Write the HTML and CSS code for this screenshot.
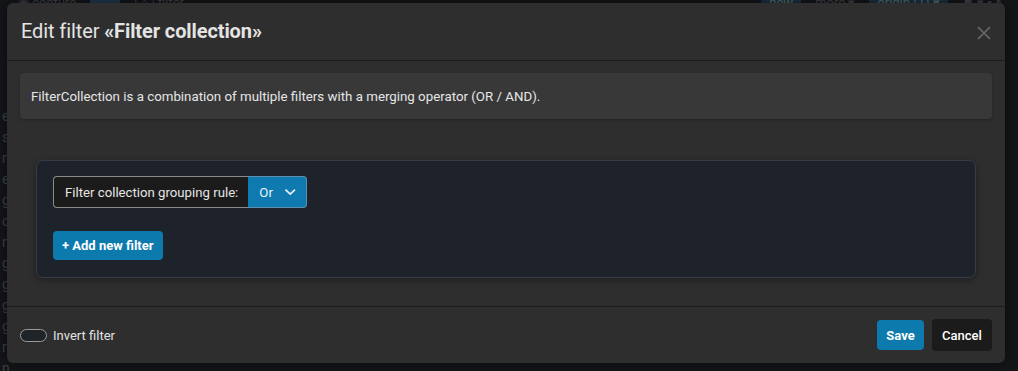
FILE: index.html
```html
<!DOCTYPE html>
<html>
<head>
<meta charset="utf-8">
<link rel="stylesheet" href="styles.css">
</head>
<body>
<div class="backdrop">
  <div class="bg-toolbar">
    <span class="bg-item">◉ conture</span>
    <span class="bg-chip"></span>
    <span class="bg-item">| ⌂ | filter</span>
    <span class="bg-spacer"></span>
    <span class="bg-btn">new</span>
    <span class="bg-item">more ▾</span>
    <span class="bg-btn">origin (1) ▾</span>
    <span class="bg-item">⚑ ▾ ▪ ↖</span>
  </div>
  <div class="bg-rows">
    <span>e</span><span>s</span><span>n</span><span>e</span><span>g</span><span>c</span><span>n</span><span>g</span><span>g</span><span>g</span><span>g</span><span>m</span><span>n</span>
  </div>
</div>

<div class="modal">
  <div class="modal-header">
    <h1 class="modal-title">Edit filter <b>«Filter collection»</b></h1>
    <span class="close">
      <svg width="14" height="14" viewBox="0 0 14 14"><path d="M1 1L13 13M13 1L1 13" stroke="#6a6a6a" stroke-width="1.6" fill="none"/></svg>
    </span>
  </div>
  <div class="modal-body">
    <div class="info">FilterCollection is a combination of multiple filters with a merging operator (OR / AND).</div>
    <div class="panel">
      <div class="input-group">
        <span class="ig-label">Filter collection grouping rule:</span>
        <span class="ig-select">Or
          <svg width="13" height="8" viewBox="0 0 13 8"><path d="M1.5 1.5L6.5 6.3L11.5 1.5" stroke="#e8f2f8" stroke-width="1.7" fill="none"/></svg>
        </span>
      </div>
      <div><button class="btn btn-primary btn-add">+ Add new filter</button></div>
    </div>
  </div>
  <div class="modal-footer">
    <label class="toggle-wrap"><span class="toggle"></span><span class="toggle-text">Invert filter</span></label>
    <div class="actions">
      <button class="btn btn-primary btn-save">Save</button>
      <button class="btn btn-dark">Cancel</button>
    </div>
  </div>
</div>
</body>
</html>
```

FILE: styles.css
```css
* { box-sizing: border-box; }
html, body { margin: 0; height: 100%; }
body {
  background: #131518;
  font-family: Roboto, "Noto Sans", "Liberation Sans", sans-serif;
  color: #e2e2e2;
  overflow: hidden;
  position: relative;
  width: 1018px;
  height: 371px;
}
.backdrop { opacity: 0.35; color: #8a8f96; font-size: 13px; }
.bg-toolbar {
  display: flex; align-items: center; gap: 14px;
  height: 14px; padding: 0 12px 0 18px; line-height: 12px; margin-top: -4px;
}
.bg-chip { width: 30px; height: 10px; background: #3a78b0; border-radius: 2px; }
.bg-spacer { flex: 1; }
.bg-btn { background: #2a5f8f; color: #cfe; padding: 0 8px; border-radius: 2px; }
.bg-rows { display: flex; flex-direction: column; gap: 5px; padding: 98px 0 0 2px; font-size: 14px; line-height: 16px; }

.modal {
  position: absolute; left: 7px; top: 3px;
  width: 998px; height: 360px;
  background: #2e2e2e;
  border-radius: 6px;
  display: flex; flex-direction: column;
  box-shadow: 0 0 12px rgba(0,0,0,0.5);
}
.modal-header {
  height: 58px; flex: none;
  display: flex; align-items: center; justify-content: space-between;
  padding: 0 14px 0 14px;
  border-bottom: 1px solid #1e1e1e;
}
.modal-title { margin: 0; font-size: 20px; font-weight: 400; color: #e4e4e4; letter-spacing: -0.1px; padding-bottom: 1px; }
.modal-title b { font-weight: 700; }
.close { display: flex; margin-right: 0; padding-top: 2px; }

.modal-body {
  flex: 1;
  padding: 12px 13px 0 13px;
  border-bottom: 1px solid #1e1e1e;
}
.info {
  background: #383838;
  border-radius: 4px;
  height: 46px;
  display: flex; align-items: center;
  padding: 0 11px;
  font-size: 13.3px; color: #e6e6e6;
  box-shadow: 0 1px 3px rgba(0,0,0,0.25);
}
.panel {
  margin: 41px 16px 0 16px;
  background: #1e222a;
  border: 1px solid #383c44;
  border-radius: 7px;
  height: 118px;
  padding: 15px 16px;
  box-shadow: 0 2px 6px rgba(0,0,0,0.35);
}
.input-group { display: inline-flex; height: 32px; font-size: 13.2px; }
.ig-label {
  display: flex; align-items: center;
  background: #1b1b1b;
  border: 1px solid #8a8a8a; border-right: none;
  border-radius: 4px 0 0 4px;
  padding: 0 10px 0 11px;
  color: #e6e6e6;
}
.ig-select {
  display: flex; align-items: center; gap: 11px;
  background: #0e7ab0;
  border: 1px solid #5b8fad; border-left: none;
  border-radius: 0 4px 4px 0;
  padding: 0 10px 0 11px;
  color: #eaf4fa; width: 59px;
}
.btn {
  font-family: inherit; border: none; border-radius: 4px; cursor: pointer;
  font-size: 13px; color: #fff;
}
.btn-primary { background: #0d7aad; }
.btn-add { margin-top: 23px; height: 29px; padding: 0 9px; font-weight: 700; font-size: 13px; }

.modal-footer {
  height: 56px; flex: none;
  display: flex; align-items: center; justify-content: space-between;
  padding: 0 13px;
}
.toggle-wrap { display: flex; align-items: center; gap: 6px; }
.toggle {
  width: 27px; height: 13px; border: 1px solid #9a9a9a; border-radius: 7px;
  background: #1f2428;
}
.toggle-text { font-size: 13px; color: #e2e2e2; }
.actions { display: flex; gap: 8px; align-items: center; }
.btn-save { height: 30px; width: 47px; font-weight: 700; }
.btn-dark { background: #1b1b1b; height: 32px; width: 60px; font-weight: 500; }
```
